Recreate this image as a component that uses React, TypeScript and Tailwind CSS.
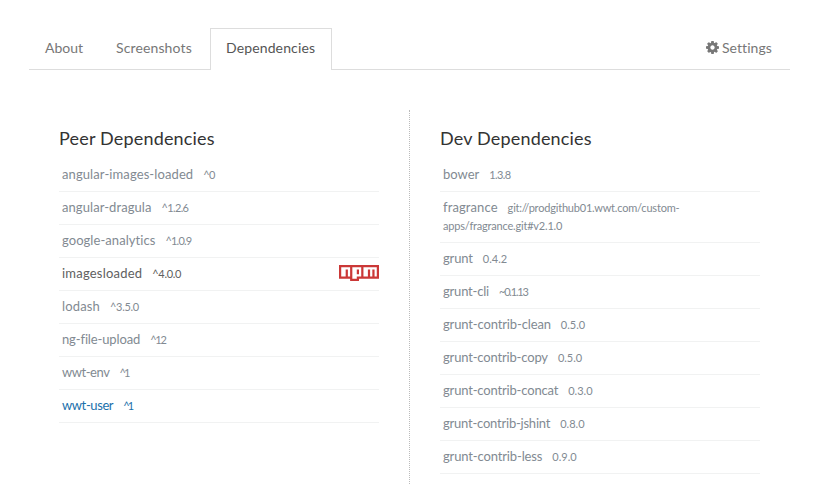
type Dependency = {
  name: string;
  version: string;
  tone?: 'dark' | 'link';
  npm?: boolean;
  nameFit: string;
  versionFit?: string;
};

const peer: Dependency[] = [
  { name: 'angular-images-loaded', version: '^0', nameFit: 'tracking-[0.1px]', versionFit: 'tracking-[-0.5px]' },
  { name: 'angular-dragula', version: '^1.2.6', nameFit: 'tracking-[0.07px]', versionFit: 'tracking-[-0.65px]' },
  { name: 'google-analytics', version: '^1.0.9', nameFit: 'tracking-[0.06px]', versionFit: 'tracking-[-0.8px]' },
  { name: 'imagesloaded', version: '^4.0.0', tone: 'dark', npm: true, nameFit: 'tracking-[0.21px]', versionFit: 'tracking-[-0.3px]' },
  { name: 'lodash', version: '^3.5.0', nameFit: 'tracking-[0.15px]', versionFit: 'tracking-[-0.3px]' },
  { name: 'ng-file-upload', version: '^12', nameFit: 'tracking-[-0.13px]', versionFit: 'tracking-[-1.2px]' },
  { name: 'wwt-env', version: '^1', nameFit: 'tracking-[-0.45px]', versionFit: 'tracking-[-1.8px]' },
  { name: 'wwt-user', version: '^1', tone: 'link', nameFit: 'tracking-[-0.4px]', versionFit: 'tracking-[-1.8px]' },
];

const dev: Dependency[] = [
  { name: 'bower', version: '1.3.8', nameFit: 'tracking-[0px]', versionFit: 'tracking-[-0.6px]' },
  { name: 'fragrance', version: 'git://prodgithub01.wwt.com/custom-apps/fragrance.git#v2.1.0', nameFit: 'tracking-[0.1px]', versionFit: 'tracking-[-0.2px]' },
  { name: 'grunt', version: '0.4.2', nameFit: 'tracking-[-0.15px]' },
  { name: 'grunt-cli', version: '~0.1.13', nameFit: 'tracking-[-0.2px]', versionFit: 'tracking-[-1.2px]' },
  { name: 'grunt-contrib-clean', version: '0.5.0', nameFit: 'tracking-[-0.14px]' },
  { name: 'grunt-contrib-copy', version: '0.5.0', nameFit: 'tracking-[-0.17px]' },
  { name: 'grunt-contrib-concat', version: '0.3.0', nameFit: 'tracking-[-0.17px]' },
  { name: 'grunt-contrib-jshint', version: '0.8.0', nameFit: 'tracking-[-0.22px]' },
  { name: 'grunt-contrib-less', version: '0.9.0', nameFit: 'tracking-[-0.14px]' },
];

const tones = { dark: 'text-[#606060]', link: 'text-[#1a70ab]', muted: 'text-[#828a92]' };

function NpmLogo() {
  return (
    <svg className="mt-px h-4 w-10 shrink-0" viewBox="0 0 18 7" preserveAspectRatio="none" aria-label="npm">
      <path fill="#cb3837" d="M0 0h18v6H9v1H5V6H0V0zm1 5h2V2h1v3h1V1H1v4zm5-4v5h2V5h2V1H6zm2 1h1v2H8V2zm3-1v4h2V2h1v3h1V2h1v3h1V1h-6z" />
    </svg>
  );
}

function Gear() {
  return (
    <svg className="mr-[3px] size-[13px]" viewBox="0 0 1536 1536" fill="currentColor">
      <path d="M1024 768q0-106-75-181t-181-75-181 75-75 181 75 181 181 75 181-75 75-181zm512-109v222q0 12-8 23t-20 13l-185 28q-19 54-39 91 35 50 107 138 10 12 10 25t-9 23q-27 37-99 108t-94 71q-12 0-26-9l-138-108q-44 23-91 38-16 136-29 186-7 28-36 28H657q-14 0-24.500-8.500T621 1506l-28-184q-49-16-90-37l-141 107q-10 9-25 9-14 0-25-11-126-114-165-168-7-10-7-23 0-12 8-23 15-21 51-66.500t54-70.500q-27-50-41-99L29 913q-13-2-21-12.500T0 877V655q0-12 8-23t19-13l186-28q14-46 39-92-40-57-107-138-10-12-10-24 0-10 9-23 26-36 98.500-107.500T337 135q13 0 26 10l138 107q44-23 91-38 16-136 29-186 7-28 36-28h222q14 0 24.500 8.500T915 30l28 184q49 16 90 37l142-107q9-9 24-9 13 0 25 10 129 119 165 170 7 8 7 22 0 12-8 23-15 21-51 66.500t-54 70.500q26 50 41 98l183 28q13 2 21 12.500t8 23.500z" />
    </svg>
  );
}

function DependencyList({ title, items }: { title: string; items: Dependency[] }) {
  return (
    <section className="w-80">
      <h2 className="mt-4 h-[33px] text-[18px] leading-6 tracking-[0.18px] text-[#333]">{title}</h2>
      <ul>
        {items.map((d) => (
          <li key={d.name} className={`flex items-start justify-between border-b border-[#f1f2f2] pt-1.5 pb-2 pl-[3px] ${d.npm ? 'h-[33px]' : ''} ${tones[d.tone ?? 'muted']}`}>
            <div className="max-w-[250px] text-[13px] leading-[18px]">
              <span className={`mr-2.5 ${d.nameFit}`}>{d.name}</span>
              <span className={`text-[11px] leading-3 ${d.versionFit ?? ''}`}>{d.version}</span>
            </div>
            {d.npm && <NpmLogo />}
          </li>
        ))}
      </ul>
    </section>
  );
}

export default function App() {
  return (
    <div className="h-[484px] w-[825px] overflow-hidden bg-white px-[29px] pt-7 font-['Lato',sans-serif]">
      <nav className="flex h-[42px] w-[761px] border-b border-[#ddd] text-[14px] leading-5 tracking-[0.13px] text-[#777]">
        <a className="w-[87px] pt-[10px] pl-4 tracking-[0px]">About</a>
        <a className="w-[94px] pt-[10px]">Screenshots</a>
        <a className="-mb-px w-[122px] border border-b-0 border-[#ddd] bg-white pt-[9px] pl-[15px] text-[#555]">Dependencies</a>
        <a className="ml-auto flex w-[84px] items-start pt-[10px] tracking-[0.05px]"><span className="pt-[3px]"><Gear /></span>Settings</a>
      </nav>
      <main className="mt-10 flex h-[374px] pl-[30px]">
        <div className="w-[350px]"><DependencyList title="Peer Dependencies" items={peer} /></div>
        <div className="border-l border-dotted border-[#bbb] pl-[30px]"><DependencyList title="Dev Dependencies" items={dev} /></div>
      </main>
    </div>
  );
}
